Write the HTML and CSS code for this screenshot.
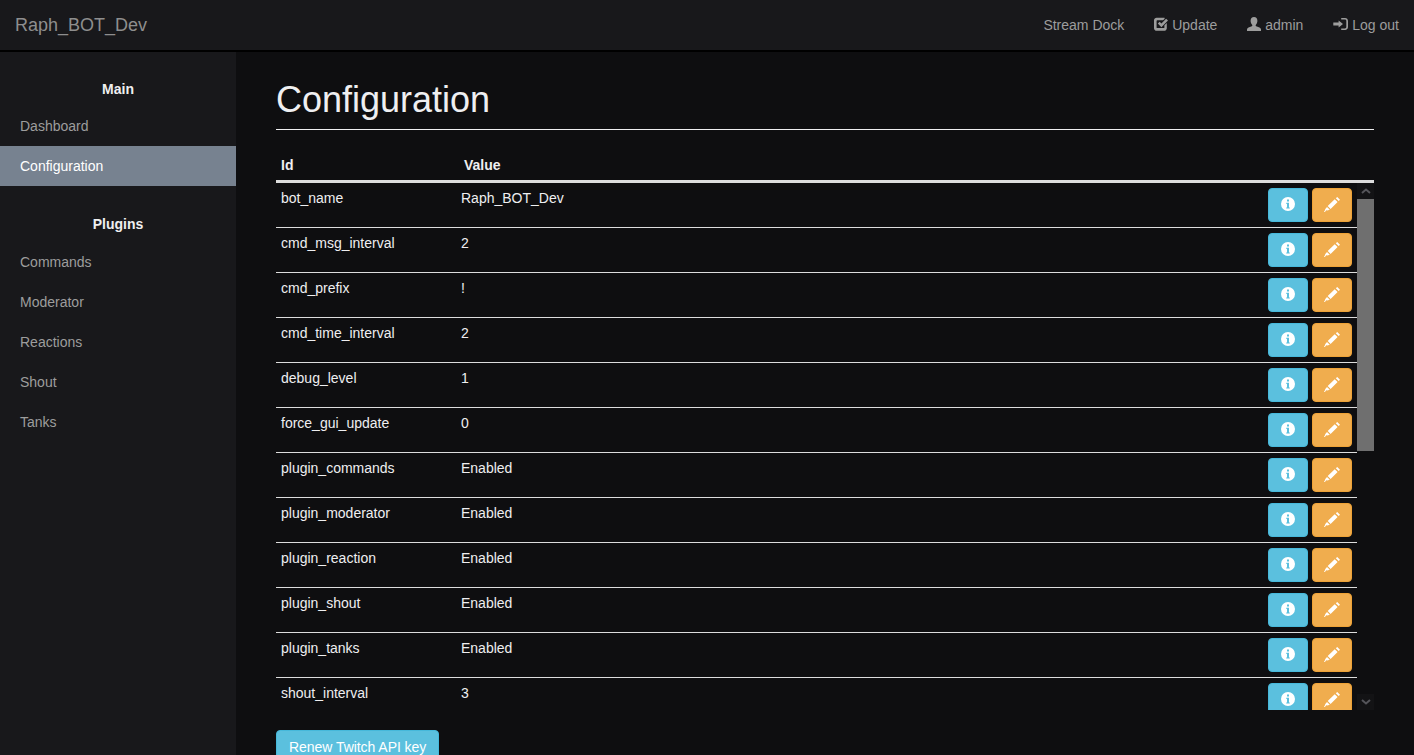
FILE: index.html
```html
<!DOCTYPE html>
<html lang="en">
<head>
    <meta charset="UTF-8">
    <title>Configuration</title>
    <link rel="stylesheet" href="styles.css">
</head>
<body>
    <svg class="sprites" width="0" height="0">
        <symbol id="i-info" viewBox="0 0 14 14">
            <path fill-rule="evenodd" d="M7 0a7 7 0 1 0 0 14A7 7 0 0 0 7 0zM6 2.500h2v1.900H6zM5.300 5.800H8v4.600h.8v1.200H5.200v-1.200H6V7H5.300z"/>
        </symbol>
        <symbol id="i-pencil" viewBox="0 0 16 15">
            <path d="M11.800 1.300L13.200 0l2.800 2.700-1.300 1.300zM10.700 2.200l2.900 2.800-7 6.900-2.900-2.800zM3 10l2.800 2.700-2.500.9-.5-.5-1.500 1.500L0 15l-.2-.5 1.600-1.600-.5-.5z"/>
        </symbol>
        <symbol id="i-check" viewBox="0 0 14 14">
            <path d="M2.600.8h8v1.100L9 3.300H3.300c-.4 0-.7.3-.7.700v6.400c0 .4.300.7.700.7h6.400c.4 0 .7-.3.700-.7V8.300l2.400-2.400v5.300c0 1.400-1.200 2.600-2.600 2.600H2.600C1.200 13.800 0 12.600 0 11.200V3.400C0 2 1.200.8 2.600.8z"/>
            <path d="M5.700 4.700l1.700 1.700L12.100 1.700 14 3.600 7.400 10.200 3.800 6.600z"/>
        </symbol>
        <symbol id="i-user" viewBox="0 0 14 14">
            <path d="M7 0c2.200 0 3.400 1.500 3.400 3.700 0 1.600-.7 3.200-1.500 4.100-.4.500-.3 1.100.3 1.400l3.300 1.400c1 .5 1.500 1.200 1.500 2.100V14H0v-1.300c0-.9.500-1.600 1.500-2.100l3.300-1.400c.6-.3.700-.9.300-1.400C4.300 6.900 3.600 5.300 3.600 3.700 3.600 1.500 4.800 0 7 0z"/>
        </symbol>
        <symbol id="i-login" viewBox="0 0 15 14">
            <path d="M8.200 1h3.900C13.700 1 15 2.300 15 3.900v6.200c0 1.600-1.300 2.900-2.900 2.900H8.200v-1.600h3.700c.8 0 1.400-.6 1.400-1.400V4c0-.8-.6-1.400-1.400-1.400H8.200z"/>
            <path d="M5.600 3.400L10 7l-4.400 3.600V8.400H.3V5.600h5.300z"/>
        </symbol>
    </svg>

    <header class="navbar">
        <a class="brand" href="#">Raph_BOT_Dev</a>
        <ul class="nav-links">
            <li><a href="#">Stream Dock</a></li>
            <li><a href="#"><svg class="icon"><use href="#i-check"/></svg> Update</a></li>
            <li><a href="#"><svg class="icon"><use href="#i-user"/></svg> admin</a></li>
            <li><a href="#"><svg class="icon icon-login"><use href="#i-login"/></svg> Log out</a></li>
        </ul>
    </header>

    <div class="wrapper">
        <aside class="sidebar">
            <h4>Main</h4>
            <ul class="side-nav">
                <li><a href="#">Dashboard</a></li>
                <li><a class="active" href="#">Configuration</a></li>
            </ul>
            <h4>Plugins</h4>
            <ul class="side-nav">
                <li><a href="#">Commands</a></li>
                <li><a href="#">Moderator</a></li>
                <li><a href="#">Reactions</a></li>
                <li><a href="#">Shout</a></li>
                <li><a href="#">Tanks</a></li>
            </ul>
        </aside>

        <main class="content">
            <h1>Configuration</h1>

            <div class="table-head">
                <span class="col-id">Id</span>
                <span>Value</span>
            </div>

            <div class="table-scroll">
                <table class="config-table">
                    <tbody id="config_rows"></tbody>
                </table>
                <div class="scrollbar">
                    <div class="scroll-btn"><svg viewBox="0 0 10 6"><path d="M1 5l4-3.500L9 5"/></svg></div>
                    <div class="scroll-track"><div class="scroll-thumb"></div></div>
                    <div class="scroll-btn"><svg viewBox="0 0 10 6"><path d="M1 1l4 3.500L9 1"/></svg></div>
                </div>
            </div>

            <a class="btn btn-info btn-renew" href="#">Renew Twitch API key</a>
        </main>
    </div>

    <script>
        // Config rows
        const rows = [
            ['bot_name', 'Raph_BOT_Dev'],
            ['cmd_msg_interval', '2'],
            ['cmd_prefix', '!'],
            ['cmd_time_interval', '2'],
            ['debug_level', '1'],
            ['force_gui_update', '0'],
            ['plugin_commands', 'Enabled'],
            ['plugin_moderator', 'Enabled'],
            ['plugin_reaction', 'Enabled'],
            ['plugin_shout', 'Enabled'],
            ['plugin_tanks', 'Enabled'],
            ['shout_interval', '3']
        ];

        const body = document.getElementById('config_rows');
        rows.forEach(function (row) {
            const tr = document.createElement('tr');
            tr.innerHTML = `<td class="cell-id">${row[0]}</td>
                <td>${row[1]}</td>
                <td class="cell-actions">
                    <a class="btn btn-info btn-icon" href="#"><svg class="icon"><use href="#i-info"/></svg></a>
                    <a class="btn btn-warning btn-icon" href="#"><svg class="icon-pencil"><use href="#i-pencil"/></svg></a>
                </td>`;
            body.appendChild(tr);
        });
    </script>
</body>
</html>
```

FILE: styles.css
```css
/* Base */
html, body {
    height: 100%;
    overflow: hidden;
}

body {
    margin: 0;
    background-color: #0e0e10;
    color: #efeff1;
    font-family: "Liberation Sans", Arial, sans-serif;
    font-size: 14px;
    line-height: 20px;
}

a {
    text-decoration: none;
}

ul {
    list-style: none;
    margin: 0;
    padding: 0;
}

.sprites {
    position: absolute;
}

.icon {
    width: 14px;
    height: 14px;
    fill: currentColor;
    vertical-align: -1px;
}

.icon-login {
    width: 15px;
}

/* Navbar */
.navbar {
    height: 50px;
    border-bottom: 2px solid #000;
    background-color: #18181b;
    display: flex;
    align-items: center;
    justify-content: space-between;
    padding: 0 15px;
}

.brand {
    font-size: 18px;
    color: #8e8e8e;
}

.nav-links {
    display: flex;
    gap: 30px;
}

.nav-links a {
    color: #9d9d9d;
}

/* Sidebar */
.wrapper {
    display: flex;
    height: calc(100vh - 52px);
}

.sidebar {
    width: 236px;
    flex-shrink: 0;
    background-color: #18181b;
    padding-top: 27px;
    box-sizing: border-box;
}

.sidebar h4 {
    margin: 0 0 7px;
    font-size: 14px;
    line-height: 20px;
    text-align: center;
    color: #efeff1;
}

.side-nav + h4 {
    margin-bottom: 8px;
}

.side-nav {
    margin-bottom: 28px;
}

.side-nav a {
    display: block;
    height: 40px;
    line-height: 40px;
    padding-left: 20px;
    color: #9d9d9d;
}

.side-nav a.active {
    background-color: #778290;
    color: #fff;
}

/* Content */
.content {
    flex: 1;
    min-width: 0;
    padding: 0 40px;
    overflow: hidden;
}

.content h1 {
    margin: 0;
    padding: 28px 0 9px;
    border-bottom: 1px solid #efeff1;
    font-size: 36px;
    font-weight: 500;
    line-height: 40px;
}

.table-head {
    display: flex;
    height: 53px;
    align-items: flex-end;
    padding: 0 0 5px 5px;
    box-sizing: border-box;
    border-bottom: 3px solid #ddd;
    font-weight: bold;
}

.col-id {
    width: 183px;
}

.table-scroll {
    display: flex;
    height: 527px;
    overflow: hidden;
}

.config-table {
    flex: 1;
    border-collapse: separate;
    border-spacing: 0;
    align-self: flex-start;
}

.config-table td {
    height: 45px;
    box-sizing: border-box;
    padding: 5px 5px 0;
    vertical-align: top;
    border-bottom: 1px solid #ddd;
}

.config-table .cell-id {
    width: 180px;
}

.config-table .cell-actions {
    width: 94px;
    white-space: nowrap;
    text-align: right;
}

.config-table tr:last-child td {
    border-bottom: 0;
}

/* Buttons */
.btn {
    display: inline-block;
    box-sizing: border-box;
    border-radius: 4px;
    color: #fff;
}

.btn-info {
    background-color: #5bc0de;
    border: 1px solid #46b8da;
}

.btn-warning {
    background-color: #f0ad4e;
    border: 1px solid #eea236;
}

.btn-icon {
    width: 40px;
    height: 34px;
    padding-top: 8px;
    text-align: center;
    line-height: 14px;
    vertical-align: top;
}

.icon-pencil {
    width: 16px;
    height: 15px;
    fill: currentColor;
}

.btn-renew {
    margin-top: 20px;
    padding: 6px 12px;
    letter-spacing: -0.05px;
}

/* Scrollbar */
.scrollbar {
    width: 17px;
    flex-shrink: 0;
    display: flex;
    flex-direction: column;
}

.scroll-btn {
    height: 16px;
    background-color: #131315;
    display: flex;
    align-items: center;
    justify-content: center;
}

.scroll-btn svg {
    width: 10px;
    height: 6px;
    fill: none;
    stroke: #55555a;
    stroke-width: 2;
}

.scroll-track {
    flex: 1;
}

.scroll-thumb {
    height: 252px;
    background-color: #6f6f6f;
}
```
